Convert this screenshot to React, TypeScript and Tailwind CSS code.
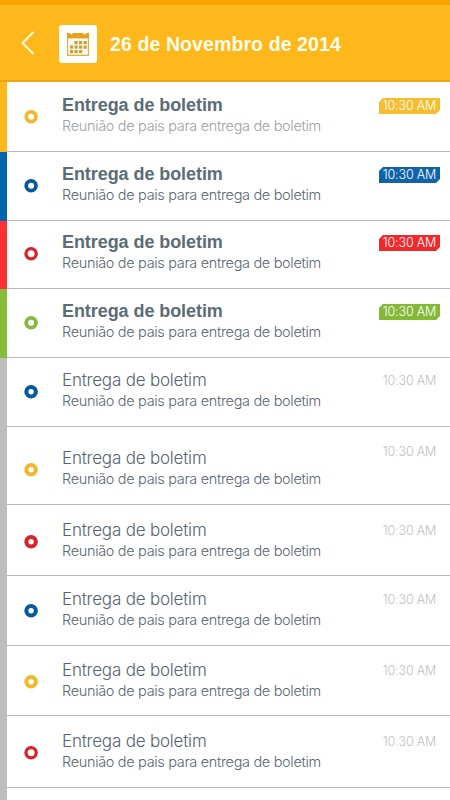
type Tone = { bar: string; ring: string; tag: string };

const yellow: Tone = { bar: "bg-[#fdb91c]", ring: "stroke-[#f0b82c]", tag: "bg-[#f5bd2f]" };
const blue: Tone = { bar: "bg-[#0365ac]", ring: "stroke-[#045a9c]", tag: "bg-[#0f64a9]" };
const red: Tone = { bar: "bg-[#f93132]", ring: "stroke-[#dc2128]", tag: "bg-[#f0292c]" };
const green: Tone = { bar: "bg-[#87bb3c]", ring: "stroke-[#86b93c]", tag: "bg-[#84b837]" };

type Entry = {
  tone: Tone;
  active?: boolean;
  box: string;
  sub?: string;
  timeMargin?: string;
  ring?: number;
};

const entries: Entry[] = [
  { tone: yellow, active: true, box: "h-[70px] pt-[13px]", sub: "text-[#9c9fa4]" },
  { tone: blue, active: true, box: "h-[69px] pt-[12px]" },
  { tone: red, active: true, box: "h-[68px] pt-[11px]", ring: 3.3 },
  { tone: green, active: true, box: "h-[69px] pt-[12px]" },
  { tone: blue, box: "h-[69px] pt-[12px]", ring: 4.1 },
  { tone: yellow, box: "h-[78px] pt-[21px]", timeMargin: "mt-[-4px]", ring: 4.1 },
  { tone: red, box: "h-[71px] pt-[15px]", ring: 4.1 },
  { tone: blue, box: "h-[70px] pt-[13px]", ring: 4.1 },
  { tone: yellow, box: "h-[70px] pt-[14px]", ring: 4.1 },
  { tone: red, box: "h-[72px] pt-[15px]", ring: 3.3 },
];

function CalendarIcon() {
  const cells = [
    [7.5, 9], [12, 9], [16.5, 9],
    [3, 13.5], [7.5, 13.5], [12, 13.5], [16.5, 13.5],
    [3, 18], [7.5, 18], [12, 18],
  ];
  return (
    <svg width="22" height="24" viewBox="0 0 22 24">
      <path d="M0 1h22v23H0z" fill="#dfb04a" />
      <path d="M1.2 6.5h19.6v16.2H1.2z" fill="#fffdf2" />
      <path d="M0 1h22v5H0z" fill="#e8a116" />
      <path d="M3 0h2.6v2.2H3zM16.4 0H19v2.2h-2.6z" fill="#fff" />
      {cells.map(([x, y]) => (
        <rect key={`${x}-${y}`} x={x} y={y} width="3.2" height="3.2" fill="#cf9c31" />
      ))}
    </svg>
  );
}

function Ring({ tone, width }: { tone: Tone; width: number }) {
  return (
    <svg className="mt-[15px] size-[14px] shrink-0" viewBox="0 0 14 14" fill="none">
      <circle cx="7.1" cy="6.8" r={6.8 - width / 2} strokeWidth={width} className={tone.ring} />
    </svg>
  );
}

function Row({ tone, active, box, sub, timeMargin, ring }: Entry) {
  return (
    <li className="flex shrink-0">
      <div className={`w-[7px] shrink-0 ${active ? tone.bar : "bg-[#bebebe]"}`} />
      <div className={`flex flex-1 items-start border-b border-[#b9babc] pl-[17px] pr-[10px] ${box}`}>
        <Ring tone={tone} width={ring ?? 3.8} />
        <div className="ml-[24px] flex-1 whitespace-nowrap">
          <h2
            className={
              active
                ? "h-5 font-['Liberation_Sans',sans-serif] text-[18px] font-bold leading-[21px] tracking-[-0.07px] text-[#5b6c77]"
                : "h-5 font-['Inter',sans-serif] text-[17px] font-light leading-[21px] tracking-[-0.2px] text-[#56646e]"
            }
          >
            Entrega de boletim
          </h2>
          <p className={`font-['Inter',sans-serif] text-[14.5px] font-light leading-[21px] tracking-[-0.33px] ${sub ?? "text-[#59666f]"}`}>
            Reunião de pais para entrega de boletim
          </p>
        </div>
        <time
          className={`h-4 w-[61px] whitespace-nowrap text-center font-['Inter',sans-serif] text-[12.5px] font-light leading-4 tracking-[-0.15px] ${
            active
              ? `text-white [clip-path:polygon(4px_0,100%_0,100%_12px,57px_100%,0_100%,0_4px)] ${tone.tag}`
              : "text-[#bfc0c1]"
          } ${timeMargin ?? "mt-[3px]"}`}
        >
          10:30 AM
        </time>
      </div>
    </li>
  );
}

export default function App() {
  return (
    <main className="flex h-[800px] w-[450px] flex-col overflow-hidden bg-white">
      <header className="flex h-[82px] shrink-0 items-center border-b-2 border-t-[5px] border-b-[#eda50f] border-t-[#f7a400] bg-[#feb81c] pl-[20px]">
        <svg width="16" height="24" viewBox="0 0 16 24" fill="none" stroke="#fffbe0" strokeWidth="2">
          <path d="M13.5 1 2.5 12l11 11" />
        </svg>
        <div className="ml-[23px] mt-0.5 flex h-[38px] w-[38px] items-center justify-center rounded-[3px] bg-white">
          <CalendarIcon />
        </div>
        <h1 className="ml-[13px] mt-1 whitespace-nowrap font-['Liberation_Sans',sans-serif] text-[19.5px] font-bold tracking-[0.1px] text-[#fffdec]">
          26 de Novembro de 2014
        </h1>
      </header>
      <ul className="flex flex-col">
        {entries.map((entry, i) => (
          <Row key={i} {...entry} />
        ))}
      </ul>
      <div className="w-[7px] flex-1 bg-[#bebebe]" />
    </main>
  );
}
